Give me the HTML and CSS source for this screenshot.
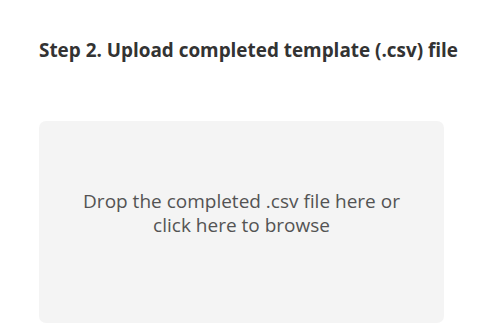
FILE: index.html
```html
<!DOCTYPE html>
<html>
<head>
<meta charset="utf-8">
<link rel="stylesheet" href="styles.css">
</head>
<body>
<div class="page">
  <h2 class="title">Step 2. Upload completed template (.csv) file</h2>
  <div class="dropzone">
    <p class="drop-text">Drop the completed .csv file here or<br>click here to browse</p>
  </div>
</div>
</body>
</html>
```
FILE: styles.css
```css
html, body {
  margin: 0;
  padding: 0;
  background: #ffffff;
}
body {
  font-family: "Open Sans", "Liberation Sans", sans-serif;
  overflow: hidden;
}
.page {
  padding: 37px 0 0 39px;
  width: 405px;
}
.title {
  margin: 0;
  font-size: 18.9px;
  font-weight: 700;
  line-height: 26px;
  color: #333333;
  white-space: nowrap;
}
.dropzone {
  margin-top: 58px;
  height: 202px;
  background: #f4f4f4;
  border-radius: 7px;
  display: flex;
  align-items: center;
  justify-content: center;
  box-sizing: border-box;
  padding-bottom: 18px;
}
.drop-text {
  margin: 0;
  text-align: center;
  font-size: 19px;
  line-height: 24px;
  color: #535353;
}
```
